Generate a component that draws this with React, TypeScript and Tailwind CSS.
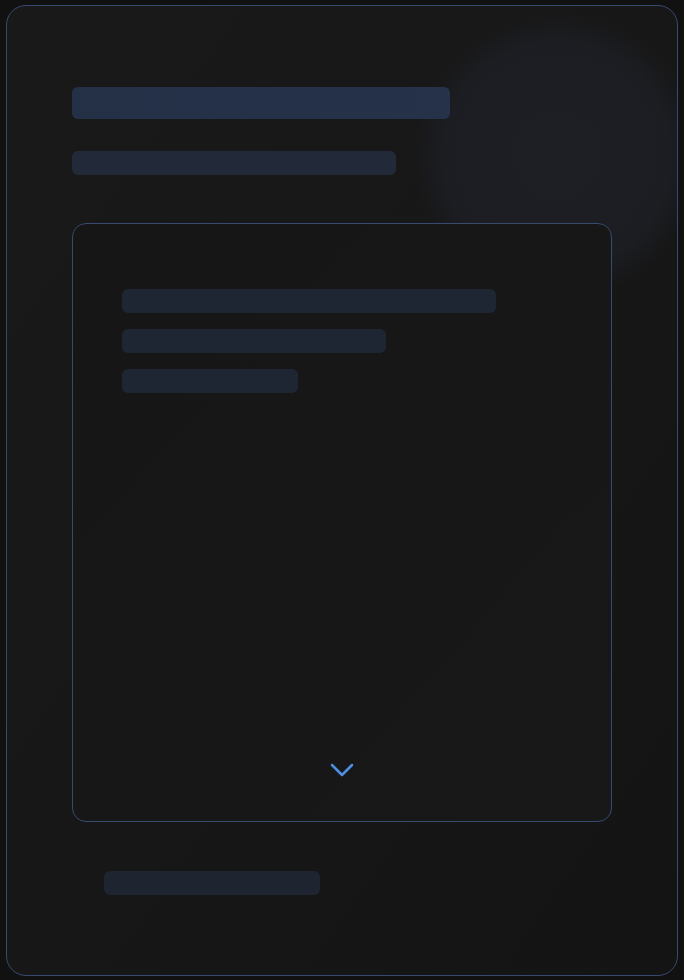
export default function App() {
  return (
    <div className="min-h-[980px] w-full bg-[#111111] px-[6px] pt-[5px] pb-[4px]" style={{ fontFamily: '"Inter", "Liberation Sans", sans-serif' }}>
      <div className="relative overflow-hidden rounded-[20px] border border-[#384a70] bg-gradient-to-br from-[#191919] via-[#171717] to-[#141414] px-[65px] pt-[81px] pb-[80px]">
        {/* soft glow top right */}
        <div
          className="pointer-events-none absolute left-[405px] top-[5px] h-[290px] w-[290px] rounded-full"
          style={{ background: 'radial-gradient(circle at 50% 50%, rgba(30,32,38,0.9) 0%, rgba(29,31,37,0.8) 55%, rgba(26,27,31,0.4) 66%, rgba(24,24,26,0) 71%)' }}
        />

        <div className="relative flex flex-col">
          <div className="h-[32px] w-[378px] rounded-md bg-gradient-to-r from-[#243046] to-[#26324a]" />
          <div className="mt-[32px] h-[24px] w-[324px] rounded-md bg-[#222a39]" />

          <div className="mt-[48px] flex h-[599px] flex-col rounded-[14px] border border-[#384a70] bg-gradient-to-br from-[#161616] to-[#181818] px-[49px] pt-[65px] pb-[43px]">
            <div className="flex flex-col gap-[16px]">
              <div className="h-[24px] w-[374px] rounded-md bg-[#1f2633]" />
              <div className="h-[24px] w-[264px] rounded-md bg-[#1f2633]" />
              <div className="h-[24px] w-[176px] rounded-md bg-[#1f2633]" />
            </div>
            <div className="mt-auto flex justify-center">
              <svg width="26" height="16" viewBox="0 0 26 16" fill="none">
                <path d="M3 3 L13 13 L23 3" stroke="#4f8fe3" strokeWidth="2.5" strokeLinecap="round" strokeLinejoin="round" />
              </svg>
            </div>
          </div>

          <div className="ml-[32px] mt-[49px] h-[24px] w-[216px] rounded-md bg-[#1f2431]" />
        </div>
      </div>
    </div>
  );
}
